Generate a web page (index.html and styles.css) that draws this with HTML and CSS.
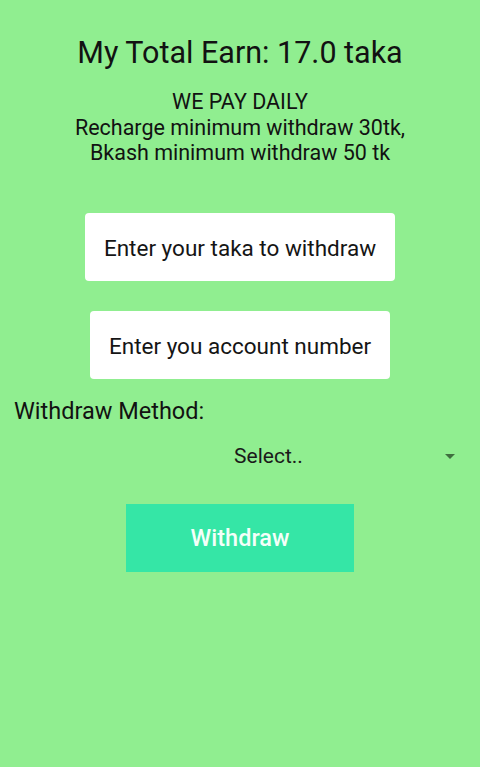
FILE: index.html
```html
<!DOCTYPE html>
<html>
<head>
<meta charset="utf-8">
<link rel="stylesheet" href="styles.css">
</head>
<body>
<div class="screen">
  <h1 class="title">My Total Earn: 17.0 taka</h1>
  <p class="info">WE PAY DAILY<br>Recharge minimum withdraw 30tk,<br>Bkash minimum withdraw 50 tk</p>
  <div class="field-row first"><div class="field">Enter your taka to withdraw</div></div>
  <div class="field-row second"><div class="field">Enter you account number</div></div>
  <div class="method">Withdraw Method:</div>
  <div class="spinner">
    <span class="spinner-text">Select..</span>
    <span class="arrow"></span>
  </div>
  <div class="btn-row"><div class="btn">Withdraw</div></div>
</div>
</body>
</html>
```
FILE: styles.css
```css
html, body {
  margin: 0;
  padding: 0;
  background: #90ee90;
}
body {
  font-family: Roboto, "Liberation Sans", sans-serif;
  color: #121212;
  width: 480px;
  height: 767px;
  overflow: hidden;
}
.screen {
  display: flex;
  flex-direction: column;
  padding-top: 35px;
}
.title {
  margin: 0;
  font-size: 30.5px;
  font-weight: 400;
  line-height: 36px;
  text-align: center;
}
.info {
  margin: 18px 0 0;
  font-size: 21.5px;
  line-height: 25.5px;
  text-align: center;
}
.field-row {
  display: flex;
  justify-content: center;
}
.field-row.first { margin-top: 47.5px; }
.field-row.second { margin-top: 30px; }
.field {
  background: #fff;
  border-radius: 4px;
  height: 68px;
  box-sizing: border-box;
  padding: 2px 19px 0;
  line-height: 66px;
  font-size: 22.5px;
  color: #151515;
}
.method {
  margin: 18px 0 0 14px;
  font-size: 23.5px;
  line-height: 28px;
}
.spinner {
  margin-top: 7px;
  height: 48px;
  display: flex;
  align-items: center;
  padding-left: 92px;
  padding-right: 25px;
}
.spinner-text {
  flex: 1;
  text-align: center;
  font-size: 21px;
  color: #1a1a1a;
}
.arrow {
  width: 0;
  height: 0;
  border-left: 5px solid transparent;
  border-right: 5px solid transparent;
  border-top: 5px solid #3f6f3f;
}
.btn-row {
  display: flex;
  justify-content: center;
  margin-top: 24px;
}
.btn {
  width: 228px;
  height: 68px;
  background: #35e6a6;
  color: #f4fff9;
  font-size: 23.5px;
  font-weight: 500;
  display: flex;
  align-items: center;
  justify-content: center;
}
```
